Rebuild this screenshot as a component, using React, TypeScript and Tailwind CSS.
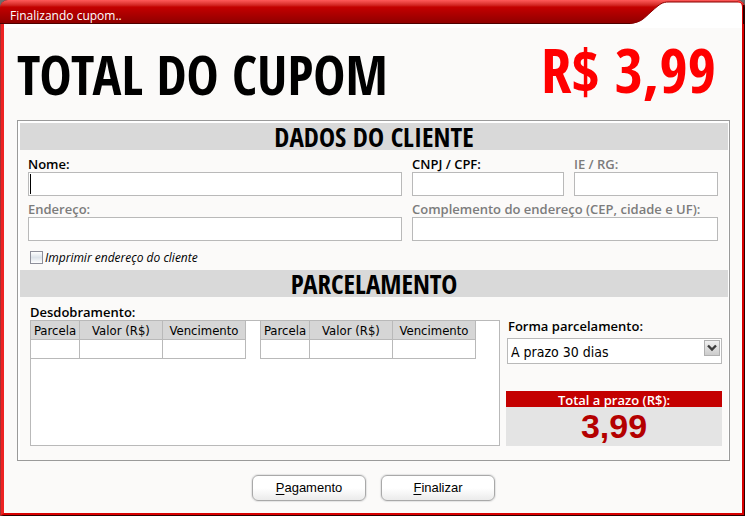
import React, { useState } from 'react';

interface FieldProps {
  id: string;
  label: string;
  muted?: boolean;
  caret?: boolean;
  className?: string;
}

const Field: React.FC<FieldProps> = ({ id, label, muted, caret, className = '' }) => (
  <div className={`flex min-w-0 flex-col ${className}`}>
    <label
      htmlFor={id}
      className={`h-4 whitespace-nowrap text-[13px] leading-4 font-semibold ${muted ? 'text-[#7c7c7c]' : 'text-black'}`}
    >
      {label}
    </label>
    <div className="relative">
      <input
        id={id}
        type="text"
        className="block h-6 w-full border border-[#b9b9b9] bg-white px-1 text-[13px] outline-none"
      />
      {caret && <span aria-hidden="true" className="absolute top-0.5 left-0.5 h-5 w-px bg-black" />}
    </div>
  </div>
);

const SectionTitle: React.FC<{ children: React.ReactNode }> = ({ children }) => (
  <h2 className="h-[27px] bg-[#d9d9d9] text-center font-['Open_Sans_Condensed','Roboto_Condensed',sans-serif] text-[27px] leading-[27px] font-bold">
    {children}
  </h2>
);

const InstallmentTable: React.FC = () => (
  <table className="-mt-px -ml-px w-[216px] table-fixed border-collapse font-['DejaVu_Sans_Condensed','DejaVu_Sans',sans-serif] text-[13px]">
    <thead>
      <tr className="h-[19px] bg-[#d6d6d6]">
        <th className="w-[49px] border border-[#b9b9b9] p-0 pt-0.5 leading-4 font-normal">Parcela</th>
        <th className="border border-[#b9b9b9] p-0 pt-0.5 leading-4 font-normal">Valor (R$)</th>
        <th className="border border-[#b9b9b9] p-0 pt-0.5 leading-4 font-normal">Vencimento</th>
      </tr>
    </thead>
    <tbody>
      <tr className="h-[19px]">
        <td className="border border-[#b9b9b9] p-0" />
        <td className="border border-[#b9b9b9] p-0" />
        <td className="border border-[#b9b9b9] p-0" />
      </tr>
    </tbody>
  </table>
);

const ActionButton: React.FC<{ hotkey: string; rest: string }> = ({ hotkey, rest }) => (
  <button
    type="button"
    className="h-[26px] w-[114px] rounded-md border border-[#a9a9a9] bg-linear-to-b from-white via-white to-[#ebebeb] font-['Liberation_Sans',sans-serif] text-[13px] leading-5 shadow-[0_0_1px_1px_#e4e4e4]"
  >
    <span className="underline underline-offset-2">{hotkey}</span>
    {rest}
  </button>
);

export default function App() {
  const [printAddress, setPrintAddress] = useState(false);
  const [plan, setPlan] = useState('30');

  return (
    <div className="flex min-h-screen flex-col bg-[#6c6c6c] font-['Open_Sans',sans-serif] text-black">
      <div className="flex grow flex-col overflow-hidden rounded-t-lg bg-linear-to-r from-[#b93a3a] to-[#2a0000] to-[4px]">
        <header className="relative flex h-6 items-center border-b border-[#4d0000] bg-linear-to-b from-[#ff5a5a] via-[#c40000] via-30% to-[#900000] pt-2 pl-2.5">
          <h1 className="text-xs leading-4 whitespace-nowrap text-white">Finalizando cupom..</h1>
          <svg className="absolute top-0 right-0" width="115" height="24" viewBox="0 0 115 24">
            <path d="M0 24 C12 22 13 19 22 11 C30 4 32 2 39 2 H108 Q112 2 112 6 V24 Z" fill="#fff" />
            <path d="M0 23.5 C12 22 13 19 22 11 C30 4 32 2 39 2 H108" fill="none" stroke="#8b0000" />
            <path d="M108 2 Q112.500 2 112.500 7 V24" fill="none" stroke="#e00000" />
            <path d="M114 5 V24" fill="none" stroke="#2a0000" strokeWidth="2" />
          </svg>
        </header>

        <div className="mr-px mb-px ml-px flex grow flex-col border-r-2 border-b-2 border-l-3 border-[#d80000] border-l-[#ee2222]">
          <main className="flex grow flex-col border-t-4 border-white bg-[#fbfaf9] pr-3 pl-[13px]">
            <div className="flex h-[92px] items-start justify-between pr-3.5 font-['Open_Sans_Condensed','Roboto_Condensed',sans-serif] font-bold whitespace-nowrap">
              <p className="pt-4 text-[54px] leading-[60px]">TOTAL DO CUPOM</p>
              <p className="pt-3 text-[61px] leading-[60px] text-[#ff0000]">R$ 3,99</p>
            </div>

            <form className="border border-[#9a9a9a]" onSubmit={e => e.preventDefault()}>
              <div className="border-2 border-r border-b-0 border-white pb-3.5">
                <SectionTitle>DADOS DO CLIENTE</SectionTitle>

                <div className="mt-1.5 grid grid-cols-[374fr_152fr_144fr] gap-x-2.5 gap-y-[5px] pr-2.5 pl-2">
                  <Field id="nome" label="Nome:" caret />
                  <Field id="cnpj" label="CNPJ / CPF:" />
                  <Field id="ie" label="IE / RG:" muted />
                  <Field id="endereco" label="Endereço:" muted />
                  <Field id="complemento" label="Complemento do endereço (CEP, cidade e UF):" muted className="col-span-2" />
                </div>

                <div className="flex h-[29px] items-center gap-0.5 pt-1 pl-2.5">
                  <input
                    id="imprimir"
                    type="checkbox"
                    checked={printAddress}
                    onChange={e => setPrintAddress(e.target.checked)}
                    className="size-[13px] appearance-none border border-[#8e8f9a] bg-linear-to-b from-white via-[#dde3ea] to-white checked:bg-[#8e8f9a]"
                  />
                  <label htmlFor="imprimir" className="text-xs leading-4 italic">Imprimir endereço do cliente</label>
                </div>

                <SectionTitle>PARCELAMENTO</SectionTitle>

                <div className="flex gap-1.5 pt-[7px] pr-1.5 pl-2.5">
                  <section className="w-[470px] shrink-0">
                    <h3 className="h-4 text-[13px] leading-4 font-semibold">Desdobramento:</h3>
                    <div className="flex h-[126px] items-start gap-[15px] border border-[#b9b9b9] bg-white">
                      <InstallmentTable />
                      <InstallmentTable />
                    </div>
                  </section>

                  <section className="flex min-w-0 grow flex-col pt-3">
                    <label htmlFor="forma" className="h-[22px] pl-0.5 text-[13px] leading-5 font-semibold whitespace-nowrap">
                      Forma parcelamento:
                    </label>
                    <div className="relative ml-px">
                      <select
                        id="forma"
                        value={plan}
                        onChange={e => setPlan(e.target.value)}
                        className="block h-[26px] w-full appearance-none border border-[#b9b9b9] bg-white pt-0.5 pl-[3px] font-['DejaVu_Sans_Condensed','DejaVu_Sans',sans-serif] text-sm outline-none"
                      >
                        <option value="30">A prazo 30 dias</option>
                      </select>
                      <span className="pointer-events-none absolute top-0.5 right-0.5 flex size-4 items-center justify-center border border-[#b0b0b0] bg-linear-to-b from-[#f0f0f0] to-[#cccccc]">
                        <svg width="10" height="8" viewBox="0 0 10 8">
                          <path d="M1 1.500 L5 5.500 L9 1.500" fill="none" stroke="#3c3c3c" strokeWidth="2.400" />
                        </svg>
                      </span>
                    </div>
                    <div className="mt-auto text-center">
                      <p className="bg-[#c40000] pt-0.5 text-[13px] leading-[14px] font-semibold text-white">Total a prazo (R$):</p>
                      <p className="bg-[#e4e4e4] font-['Liberation_Sans',sans-serif] text-[34px] leading-[39px] font-bold text-[#b40000]">
                        3,99
                      </p>
                    </div>
                  </section>
                </div>
              </div>
            </form>

            <div className="flex justify-center gap-[15px] pt-3.5 pb-3">
              <ActionButton hotkey="P" rest="agamento" />
              <ActionButton hotkey="F" rest="inalizar" />
            </div>
          </main>
        </div>
      </div>
    </div>
  );
}
